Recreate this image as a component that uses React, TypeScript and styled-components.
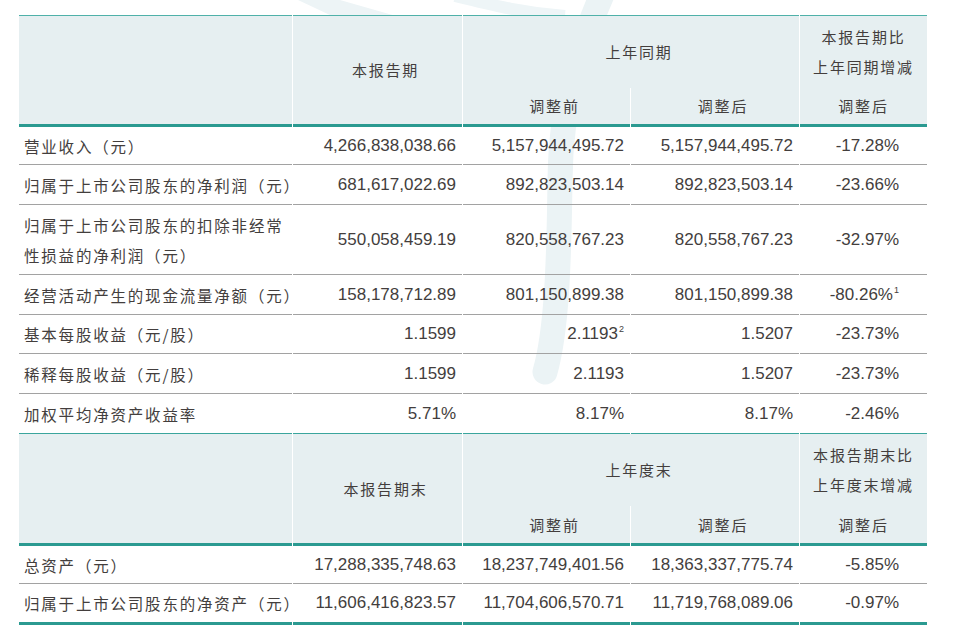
import React from 'react';
import styled, { createGlobalStyle } from 'styled-components';

const Global = createGlobalStyle`
  html, body { margin: 0; padding: 0; background: #ffffff; }
  body { font-family: "Liberation Sans", "Noto Sans CJK SC", sans-serif; color: #433e3d; }
`;

const Page = styled.div`
  position: relative;
  width: 958px;
  height: 644px;
  overflow: hidden;
  box-sizing: border-box;
  padding: 15px 0 0 18px;
`;

const Watermark = styled.svg`
  position: absolute;
  left: 0;
  top: 0;
  width: 958px;
  height: 644px;
  pointer-events: none;
`;

const Table = styled.table`
  position: relative;
  width: 910px;
  table-layout: fixed;
  border-collapse: separate;
  border-spacing: 1px 0;
`;

const Row = styled.tr<{ $h: number }>`
  height: ${p => p.$h}px;
`;

const HeadCell = styled.th<{ $shift?: boolean; $top?: boolean; $bottom?: boolean }>`
  background: #e6eff1;
  font-weight: normal;
  font-family: "Noto Sans CJK SC", sans-serif;
  font-size: 15px;
  letter-spacing: 1.8px;
  line-height: 30px;
  color: #433e3d;
  text-align: center;
  vertical-align: middle;
  padding: 0 0 0 ${p => (p.$shift ? 16 : 0)}px;
  border-top: ${p => (p.$top ? '1px solid #4fb1a9' : 'none')};
  border-bottom: ${p => (p.$bottom ? '3px solid #2b9a91' : 'none')};
`;

type Line = 'gray' | 'teal' | 'thick';
const lineStyle = (l: Line) =>
  l === 'gray' ? '1px solid #a2a2a2' : l === 'teal' ? '1px solid #3aa59d' : '3px solid #2b9a91';

const LabelCell = styled.td<{ $line: Line }>`
  font-family: "Noto Sans CJK SC", sans-serif;
  font-size: 15.5px;
  letter-spacing: 1.8px;
  line-height: 30px;
  white-space: nowrap;
  text-align: left;
  vertical-align: middle;
  padding: 0 0 0 5px;
  border-bottom: ${p => lineStyle(p.$line)};
`;

const NumCell = styled.td<{ $line: Line; $pad: number }>`
  font-family: "Liberation Sans", Arial, sans-serif;
  font-size: 17px;
  line-height: 30px;
  white-space: nowrap;
  text-align: right;
  vertical-align: middle;
  padding: 0 ${p => p.$pad}px 0 0;
  border-bottom: ${p => lineStyle(p.$line)};
`;

const Sup = styled.span`
  position: relative;
  top: -7px;
  margin-left: 1px;
  font-size: 9px;
  line-height: 0;
`;

type Val = { t: string; sup?: string };
type DataRow = { label: string[]; vals: Val[]; h: number; line: Line };

const v = (t: string, sup?: string): Val => ({ t, sup });

const topRows: DataRow[] = [
  { label: ['营业收入（元）'], vals: [v('4,266,838,038.66'), v('5,157,944,495.72'), v('5,157,944,495.72'), v('-17.28%')], h: 38, line: 'gray' },
  { label: ['归属于上市公司股东的净利润（元）'], vals: [v('681,617,022.69'), v('892,823,503.14'), v('892,823,503.14'), v('-23.66%')], h: 40, line: 'gray' },
  { label: ['归属于上市公司股东的扣除非经常', '性损益的净利润（元）'], vals: [v('550,058,459.19'), v('820,558,767.23'), v('820,558,767.23'), v('-32.97%')], h: 70, line: 'gray' },
  { label: ['经营活动产生的现金流量净额（元）'], vals: [v('158,178,712.89'), v('801,150,899.38'), v('801,150,899.38'), v('-80.26%', '1')], h: 40, line: 'gray' },
  { label: ['基本每股收益（元/股）'], vals: [v('1.1599'), v('2.1193', '2'), v('1.5207'), v('-23.73%')], h: 39, line: 'gray' },
  { label: ['稀释每股收益（元/股）'], vals: [v('1.1599'), v('2.1193'), v('1.5207'), v('-23.73%')], h: 40, line: 'gray' },
  { label: ['加权平均净资产收益率'], vals: [v('5.71%'), v('8.17%'), v('8.17%'), v('-2.46%')], h: 40, line: 'teal' },
];

const bottomRows: DataRow[] = [
  { label: ['总资产（元）'], vals: [v('17,288,335,748.63'), v('18,237,749,401.56'), v('18,363,337,775.74'), v('-5.85%')], h: 38, line: 'gray' },
  { label: ['归属于上市公司股东的净资产（元）'], vals: [v('11,606,416,823.57'), v('11,704,606,570.71'), v('11,719,768,089.06'), v('-0.97%')], h: 41, line: 'thick' },
];

const pads = [6, 6, 6, 28];

const DataRows: React.FC<{ rows: DataRow[] }> = ({ rows }) => (
  <>
    {rows.map((r, i) => (
      <Row key={i} $h={r.h}>
        <LabelCell $line={r.line}>
          {r.label.map((l, j) => (
            <React.Fragment key={j}>
              {j > 0 && <br />}
              {l}
            </React.Fragment>
          ))}
        </LabelCell>
        {r.vals.map((val, j) => (
          <NumCell key={j} $line={r.line} $pad={pads[j]}>
            {val.t}
            {val.sup && <Sup>{val.sup}</Sup>}
          </NumCell>
        ))}
      </Row>
    ))}
  </>
);

const HeaderBlock: React.FC<{ current: string; prior: string; change: [string, string]; top?: boolean }> = ({
  current,
  prior,
  change,
  top,
}) => (
  <>
    <Row $h={top ? 73 : 72}>
      <HeadCell rowSpan={2} $top={top} $bottom />
      <HeadCell rowSpan={2} $top={top} $bottom $shift>
        {current}
      </HeadCell>
      <HeadCell colSpan={2} $top={top} $shift>
        {prior}
      </HeadCell>
      <HeadCell $top={top}>
        {change[0]}
        <br />
        {change[1]}
      </HeadCell>
    </Row>
    <Row $h={top ? 39 : 40}>
      <HeadCell $bottom $shift>调整前</HeadCell>
      <HeadCell $bottom $shift>调整后</HeadCell>
      <HeadCell $bottom>调整后</HeadCell>
    </Row>
  </>
);

export default function App() {
  return (
    <Page>
      <Global />
      <Watermark viewBox="0 0 958 644">
        <polygon points="298,0 340,0 396,16 332,16" fill="#edf4f6" />
        <path d="M 455 -4 C 495 6, 525 13, 565 16" stroke="#eef5f7" strokeWidth="12" fill="none" />
        <path
          d="M 604 -10 C 578 50, 561 100, 560 180 S 557 330, 545 372"
          stroke="#ebf3f5"
          strokeWidth="25"
          strokeLinecap="round"
          fill="none"
        />
      </Watermark>
      <Table>
        <colgroup>
          <col style={{ width: 273 }} />
          <col style={{ width: 169 }} />
          <col style={{ width: 167 }} />
          <col style={{ width: 168 }} />
          <col style={{ width: 127 }} />
        </colgroup>
        <tbody>
          <HeaderBlock top current="本报告期" prior="上年同期" change={['本报告期比', '上年同期增减']} />
          <DataRows rows={topRows} />
          <HeaderBlock current="本报告期末" prior="上年度末" change={['本报告期末比', '上年度末增减']} />
          <DataRows rows={bottomRows} />
        </tbody>
      </Table>
    </Page>
  );
}
